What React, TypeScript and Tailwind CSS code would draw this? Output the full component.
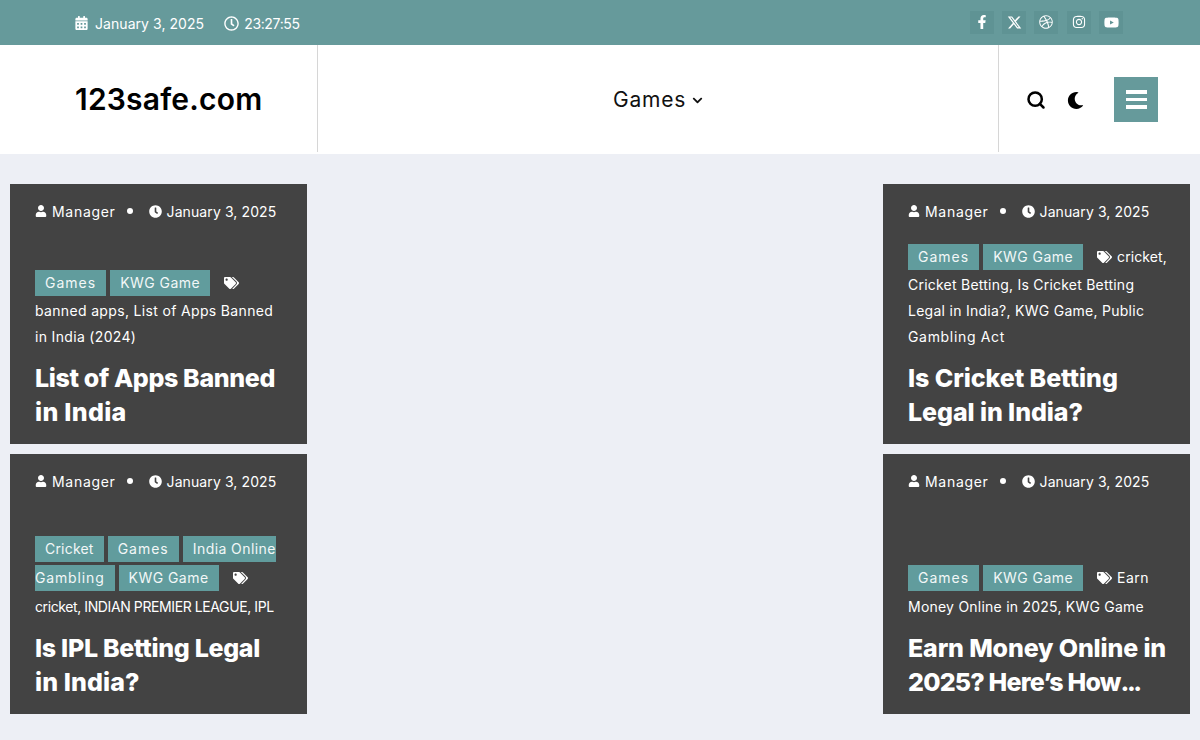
import { Fragment } from "react";
import { FaCalendarAlt, FaChevronDown, FaClock, FaDribbble, FaFacebookF, FaInstagram, FaMoon, FaRegClock, FaTags, FaUser, FaYoutube } from "react-icons/fa";
import { FaXTwitter } from "react-icons/fa6";
import { Search } from "lucide-react";
import type { ReactNode } from "react";

const socials = [
  { label: "Facebook", icon: <FaFacebookF className="h-[14px] w-[14px]" /> },
  { label: "X", icon: <FaXTwitter className="h-[15px] w-[15px]" /> },
  { label: "Dribbble", icon: <FaDribbble className="h-[14px] w-[14px]" /> },
  { label: "Instagram", icon: <FaInstagram className="h-[14px] w-[14px]" /> },
  { label: "YouTube", icon: <FaYoutube className="h-[15px] w-[15px]" /> },
];

function Chip({ children, className }: { children: ReactNode; className: string }) {
  return (
    <span className={`mr-1 inline-block h-[26px] bg-[#619c9d] align-middle text-[14px] leading-[26px] text-[#f2f7f7] ${className}`}>
      {children}
    </span>
  );
}

interface Line {
  text: ReactNode;
  className?: string;
}

interface CardProps {
  chips: ReactNode;
  tags: Line[];
  title: Line[];
}

function PostCard({ chips, tags, title }: CardProps) {
  return (
    <article className="flex h-[260px] flex-col justify-between bg-[#434343] px-[25px] pb-[15px] pt-[18px] text-white">
      <div className="-mt-px flex h-[20px] items-center text-[14px]">
        <FaUser className="mr-[5px] h-[12px] w-[12px]" />
        <span className="tracking-[0.7px]">Manager</span>
        <span className="ml-[11px] h-[6px] w-[6px] rounded-full bg-white" />
        <FaClock className="ml-[16px] mr-[5px] h-[13px] w-[13px]" />
        <span className="tracking-[0.1px]">January 3, 2025</span>
      </div>
      <div>
        <div className="whitespace-nowrap text-[14px] leading-[26px]">
          {chips}
          {tags.map((line, index) => (
            <Fragment key={index}>
              {index > 0 && <br />}
              {index === 0 && <FaTags className="mb-[3px] ml-[10px] mr-[5px] inline h-[14px] w-[15px] align-middle" />}
              <span className={line.className ?? "tracking-[0.28px]"}>{line.text}</span>
            </Fragment>
          ))}
        </div>
        <h2 className="mt-[11px] whitespace-nowrap text-[25px] font-extrabold leading-[34px]">
          {title.map((line, index) => (
            <div key={index} className={line.className ?? "tracking-[-0.1px]"}>
              {line.text}
            </div>
          ))}
        </h2>
      </div>
    </article>
  );
}

function GamesKwgChips() {
  return (
    <>
      <Chip className="mb-[2px] px-2.5 tracking-[1px]">Games</Chip>
      <Chip className="mb-[2px] px-2.5 tracking-[0.45px]">KWG Game</Chip>
    </>
  );
}

export default function App() {
  return (
    <div className="min-h-[740px] bg-[#edeff5] font-['Inter',sans-serif]">
      {/* Top bar */}
      <div className="flex h-[45px] items-center bg-[#669a9b] pl-[75px] pr-[77px] text-[14px] text-white">
        <FaCalendarAlt className="mr-[7px] mt-px h-[14px] w-[13px]" />
        <span className="mt-0.5 tracking-[0.06px]">January 3, 2025</span>
        <FaRegClock className="ml-5 mr-[5px] mt-px h-[15px] w-[15px]" />
        <span className="mt-0.5 tracking-[-0.35px]">23:27:55</span>
        <div className="-mt-[1px] ml-auto flex gap-[8.3px]">
          {socials.map((item) => (
            <a key={item.label} aria-label={item.label} className="flex h-[23px] w-[24px] items-center justify-center bg-[#5f9394]">
              {item.icon}
            </a>
          ))}
        </div>
      </div>

      {/* Header */}
      <header className="flex h-[109px] bg-white pb-[2px]">
        <div className="flex w-[318px] items-center border-r border-[#d6d6d6] pl-[75px]">
          <span className="text-[30px] font-semibold leading-none tracking-[0.2px] text-black">123safe.com</span>
        </div>
        <nav className="flex flex-1 items-center justify-center">
          <span className="mt-0.5 text-[21px] tracking-[0.75px] text-[#111]">Games</span>
          <FaChevronDown className="ml-[6px] mt-[3px] h-[11px] w-[11px] text-[#111]" />
        </nav>
        <div className="flex w-[202px] items-center border-l border-[#d6d6d6] pl-[27px]">
          <Search className="mt-[3px] h-[20px] w-[20px] text-black" strokeWidth={3} />
          <FaMoon className="ml-[21px] mt-[3px] h-[17px] w-[17px] text-black" />
          <button className="ml-[30px] mt-0.5 flex h-[45px] w-[44px] flex-col items-center justify-center gap-[4px] bg-[#669a9b]">
            <span className="h-[3.5px] w-[21px] bg-white" />
            <span className="h-[3.5px] w-[21px] bg-white" />
            <span className="h-[3.5px] w-[21px] bg-white" />
          </button>
        </div>
      </header>

      {/* Posts */}
      <main className="grid grid-cols-[297px_1fr_307px] gap-y-[10px] px-[10px] pt-[30px]">
        <PostCard
          chips={<GamesKwgChips />}
          tags={[{ text: "" }, { text: "banned apps, List of Apps Banned", className: "tracking-[0.34px]" }, { text: "in India (2024)", className: "tracking-[0.33px]" }]}
          title={[{ text: "List of Apps Banned", className: "tracking-[-0.35px]" }, { text: "in India", className: "tracking-[0.3px]" }]}
        />
        <div className="row-span-2" />
        <PostCard
          chips={<GamesKwgChips />}
          tags={[
            { text: "cricket,", className: "tracking-[0.1px]" },
            { text: "Cricket Betting, Is Cricket Betting", className: "tracking-[0.23px]" },
            { text: "Legal in India?, KWG Game, Public", className: "tracking-[0.27px]" },
            { text: "Gambling Act", className: "tracking-[0.67px]" },
          ]}
          title={[{ text: "Is Cricket Betting", className: "tracking-[-0.07px]" }, { text: "Legal in India?", className: "tracking-[-0.08px]" }]}
        />
        <PostCard
          chips={
            <>
              <Chip className="mb-[3px] px-2.5 tracking-[0.2px]">Cricket</Chip>
              <Chip className="mb-[3px] px-2.5 tracking-[1px]">Games</Chip>
              <Chip className="mb-[3px] !mr-0 pl-2.5 tracking-[0.43px]">India Online</Chip>
              <br />
              <Chip className="mb-[3px] pr-2.5 tracking-[0.85px]">Gambling</Chip>
              <Chip className="mb-[3px] px-2.5 tracking-[0.45px]">KWG Game</Chip>
            </>
          }
          tags={[{ text: "" }, { text: "cricket, INDIAN PREMIER LEAGUE, IPL", className: "tracking-[-0.4px]" }]}
          title={[{ text: "Is IPL Betting Legal", className: "tracking-[-0.3px]" }, { text: "in India?", className: "tracking-[0.1px]" }]}
        />
        <PostCard
          chips={
            <>
              <Chip className="mb-[3px] px-2.5 tracking-[1px]">Games</Chip>
              <Chip className="mb-[3px] px-2.5 tracking-[0.45px]">KWG Game</Chip>
            </>
          }
          tags={[{ text: "Earn", className: "tracking-[0.5px]" }, { text: "Money Online in 2025, KWG Game", className: "tracking-[0.23px]" }]}
          title={[
            { text: "Earn Money Online in", className: "tracking-[-0.15px]" },
            {
              text: (
                <>
                  2025? Here’s How<span className="tracking-[-2.5px]">...</span>
                </>
              ),
              className: "tracking-[-0.8px]",
            },
          ]}
        />
      </main>
    </div>
  );
}
